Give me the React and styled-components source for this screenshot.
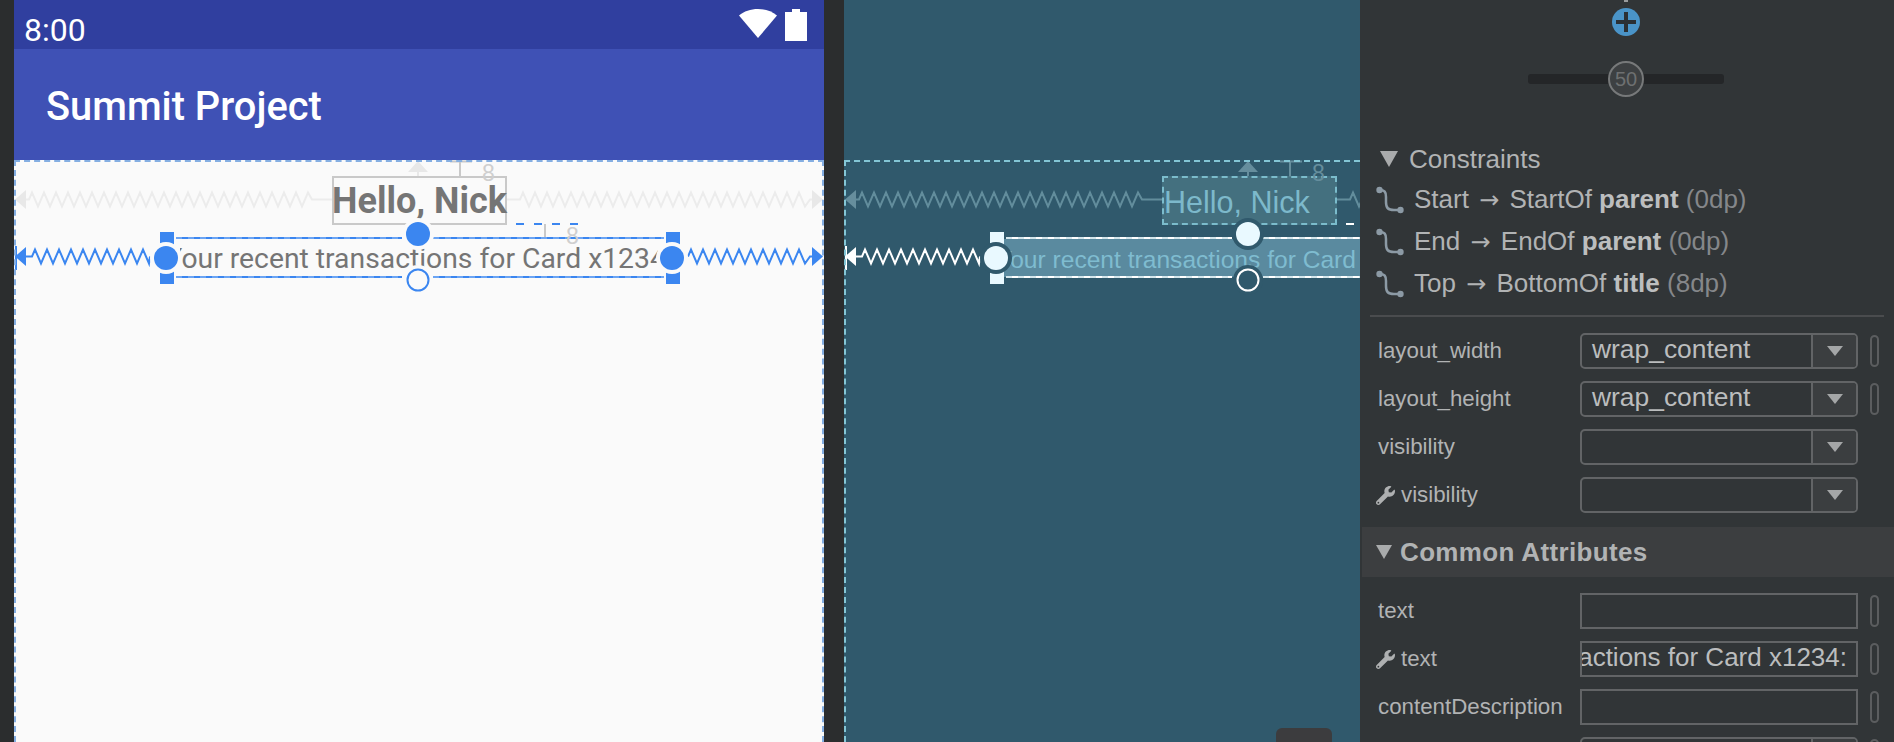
import React from "react";
import styled, { createGlobalStyle } from "styled-components";
import { FaWrench } from "react-icons/fa";

const GlobalStyle = createGlobalStyle`
  html, body {
    margin: 0;
    padding: 0;
    background: #2b2d2e;
  }
`;

const Page = styled.div`
  display: flex;
  width: 1894px;
  height: 742px;
  overflow: hidden;
  background: #2b2d2e;
`;

const Phone = styled.div`
  display: flex;
  flex-direction: column;
  flex: none;
  width: 810px;
  margin-left: 14px;
  margin-right: 20px;
`;

const StatusBar = styled.div`
  display: flex;
  justify-content: space-between;
  flex: none;
  height: 49px;
  padding: 9px 17px 0 10px;
  box-sizing: border-box;
  background: #303f9f;
  color: #fff;
  font: 400 32px/42px Roboto, sans-serif;
`;

const StatusIcons = styled.div`
  display: flex;
  align-items: flex-start;
  gap: 8px;
`;

const AppBar = styled.div`
  display: flex;
  align-items: center;
  flex: none;
  height: 111px;
  padding: 4px 0 0 32px;
  box-sizing: border-box;
  background: #3f51b5;
  color: #fff;
  font: 500 39.8px Roboto, sans-serif;
`;

const Surface = styled.div`
  position: relative;
  flex: 1;
  overflow: hidden;
  box-sizing: border-box;
  background: ${(p) => (p.$blueprint ? "#30596c" : "#fafafa")};
`;

const SurfaceEdge = styled.div`
  position: absolute;
  inset: 0;
  border: 2px dashed ${(p) => (p.$blueprint ? "#84c6d6" : "#84aee2")};
  border-right-width: ${(p) => (p.$blueprint ? 0 : "2px")};
  border-bottom-width: 0;
`;

const Blueprint = styled.div`
  display: flex;
  flex-direction: column;
  flex: none;
  width: 516px;
  height: 742px;
  background: #30596c;
`;

const BlueprintTop = styled.div`
  flex: none;
  height: 160px;
`;

const TitleBox = styled.div`
  position: absolute;
  left: 318px;
  top: 16px;
  width: 175px;
  height: 49px;
  box-sizing: border-box;
  display: flex;
  align-items: center;
  white-space: nowrap;
  ${(p) =>
    p.$blueprint
      ? `
    padding: 3px 0 0 0;
    background: #44707f;
    border: 2px dashed #7bbccc;
    color: #7db9cb;
    font: 400 30.5px "Liberation Sans", sans-serif;
  `
      : `
    justify-content: center;
    border: 2px solid #c9c9c9;
    color: #757575;
    font: 700 36px Roboto, sans-serif;
  `}
`;

const SubtitleBox = styled.div`
  position: absolute;
  left: 152px;
  top: 79px;
  width: 506px;
  height: 38px;
  padding: 0 14px;
  box-sizing: border-box;
  display: flex;
  background: ${(p) => (p.$blueprint ? "#5a8a9f" : "transparent")};
  color: ${(p) => (p.$blueprint ? "#7fbcd0" : "#757575")};
  font: ${(p) =>
    p.$blueprint
      ? '400 24.6px/42px "Liberation Sans", sans-serif'
      : "400 28.3px/40px Roboto, sans-serif"};
`;

const SubtitleClip = styled.div`
  display: flex;
  justify-content: ${(p) => (p.$blueprint ? "flex-start" : "center")};
  flex: 1;
  overflow: hidden;
  white-space: nowrap;

  span {
    margin-left: ${(p) => (p.$blueprint ? "-14px" : 0)};
  }
`;

const Measure = styled.span`
  position: absolute;
  left: ${(p) => p.$x}px;
  top: ${(p) => p.$y}px;
  color: ${(p) => p.$color};
  font: 400 23px/24px "Liberation Sans", sans-serif;
`;

const OverlaySvg = styled.svg`
  position: absolute;
  inset: 0;
  pointer-events: none;
`;

const CanvasTab = styled.div`
  position: absolute;
  left: 432px;
  bottom: 0;
  width: 56px;
  height: 14px;
  border-radius: 6px 6px 0 0;
  background: #3c3c3e;
`;

const Panel = styled.div`
  flex: none;
  width: 534px;
  height: 742px;
  overflow: hidden;
  background: #313537;
  color: #b1b3b4;
  font: 400 26px "Liberation Sans", sans-serif;
`;

const Widget = styled.div`
  display: flex;
  flex-direction: column;
  align-items: center;
  box-sizing: border-box;
  height: 88px;
  padding-right: 2px;
`;

const WidgetTick = styled.div`
  flex: none;
  width: 4px;
  height: 2px;
  margin-bottom: 6px;
  background: #9a9c9d;
`;

const AddButton = styled.div`
  position: relative;
  flex: none;
  width: 28px;
  height: 28px;
  border-radius: 50%;
  background: #4a94c8;

  &::before,
  &::after {
    content: "";
    position: absolute;
    background: #2b3034;
  }
  &::before {
    left: 4px;
    right: 4px;
    top: 12px;
    height: 4px;
  }
  &::after {
    top: 4px;
    bottom: 4px;
    left: 12px;
    width: 4px;
  }
`;

const Slider = styled.div`
  display: flex;
  align-items: center;
  justify-content: center;
  width: 196px;
  height: 10px;
  margin-top: 38px;
  border-radius: 3px;
  background: #242628;
`;

const Knob = styled.div`
  display: flex;
  align-items: center;
  justify-content: center;
  flex: none;
  width: 36px;
  height: 36px;
  box-sizing: border-box;
  border: 2px solid #77797a;
  border-radius: 50%;
  background: #3d4042;
  color: #6e7071;
  font-size: 20px;
`;

const SectionTitle = styled.div`
  display: flex;
  align-items: center;
  gap: 11px;
  height: 40px;
  margin-top: 51px;
  padding-left: 20px;
`;

const Triangle = styled.span`
  flex: none;
  width: 0;
  height: 0;
  border-left: ${(p) => p.$size}px solid transparent;
  border-right: ${(p) => p.$size}px solid transparent;
  border-top: ${(p) => p.$size * 1.8}px solid #a9abac;
`;

const ConstraintRow = styled.div`
  display: flex;
  align-items: center;
  gap: 10px;
  height: 42px;
  padding-left: 16px;
  white-space: pre;

  span {
    margin-top: -2px;
  }
  b {
    color: #bcbebf;
  }
  i {
    font-style: normal;
    color: #85878a;
  }
`;

const Arrow = styled.em`
  font: 400 24px "DejaVu Sans", sans-serif;
  margin: 0 3px 0 3px;
`;

const Divider = styled.div`
  height: 2px;
  margin: 10px 10px 0;
  background: #4a4c4e;
`;

const Form = styled.div`
  display: flex;
  flex-direction: column;
  gap: 12px;
  margin-top: 16px;
`;

const PropRow = styled.div`
  display: flex;
  align-items: center;
  flex: none;
  height: 36px;
`;

const PropLabel = styled.div`
  display: flex;
  align-items: center;
  gap: 6px;
  flex: none;
  width: 220px;
  padding-left: ${(p) => (p.$wrench ? 16 : 18)}px;
  box-sizing: border-box;
  font-size: 22.3px;
  white-space: nowrap;
`;

const Combo = styled.div`
  display: flex;
  flex: none;
  width: 278px;
  height: 36px;
  box-sizing: border-box;
  border: 2px solid #626466;
  border-radius: 5px;
`;

const ComboValue = styled.div`
  flex: 1;
  padding-left: 10px;
  color: #bbbdbe;
  font-size: 26.4px;
  line-height: 29px;
`;

const ComboArrow = styled.div`
  display: flex;
  align-items: center;
  justify-content: center;
  flex: none;
  width: 43px;
  border-left: 2px solid #626466;
  background: #3b3e40;
  border-radius: 0 3px 3px 0;
`;

const TextField = styled.div`
  display: flex;
  justify-content: flex-end;
  flex: none;
  width: 278px;
  height: 36px;
  padding: 0 9px 0 5px;
  box-sizing: border-box;
  overflow: hidden;
  border: 2px solid #626466;
  color: #bbbdbe;
  font-size: 26px;
  line-height: 29px;
  white-space: nowrap;
`;

const Pill = styled.div`
  flex: none;
  width: 9px;
  height: 32px;
  margin-left: 12px;
  box-sizing: border-box;
  border: 2px solid #5b5d5f;
  border-radius: 5px;
`;

const SectionBar = styled.div`
  display: flex;
  align-items: center;
  gap: 8px;
  height: 50px;
  margin: 14px 0 0 2px;
  padding-left: 14px;
  background: #3c3e40;
  font-size: 26px;
  font-weight: 700;
  letter-spacing: 0.35px;
`;

// zig-zag spring used by the layout editor for constraints
const zigzag = (x0, x1, y, amp = 7, step = 6) => {
  const pts = [`${x0},${y}`];
  let up = true;
  for (let x = x0 + step / 2; x < x1; x += step) {
    pts.push(`${x},${up ? y - amp : y + amp}`);
    up = !up;
  }
  pts.push(`${x1},${y}`);
  return pts.join(" ");
};

const ChevronArrow = () => (
  <svg width="16" height="10" viewBox="0 0 16 10">
    <path d="M0 0h16L8 10z" fill="#a4a6a7" />
  </svg>
);

const ConstraintIcon = () => (
  <svg width="28" height="28" viewBox="0 0 28 28" style={{ flex: "none" }}>
    <path d="M3 4c6 0 7 2 7 7v5c0 6 2 8 8 8h7" fill="none" stroke="#8c9aa5" strokeWidth="2.5" />
    <circle cx="3.5" cy="4" r="3.2" fill="#8c9aa5" />
    <circle cx="24.5" cy="24" r="3.2" fill="#8c9aa5" />
  </svg>
);

const palettes = {
  design: {
    faint: "#ececec",
    active: "#3b86f0",
    activeDash: "#9cc3f7",
    halo: "#fafafa",
    solid: "#3b86f0",
    mark: "#c9c9c9",
    hollow: "#fafafa",
    hollowStroke: "#3b86f0",
    tri: "#e8e8e8",
  },
  blueprint: {
    faint: "#628d9c",
    active: "#ffffff",
    activeDash: "#a9cdd8",
    halo: "#30596c",
    solid: "#e9f9ff",
    mark: "#668e9d",
    hollow: "#30596c",
    hollowStroke: "#ffffff",
    tri: "#668e9d",
  },
};

const ConstraintOverlay = ({ kind }) => {
  const c = palettes[kind];
  return (
    <OverlaySvg width="810" height="582" viewBox="0 0 810 582">
      {/* title: start, end and top constraints */}
      <path d="M12 30v19L1 39.5z" fill={c.tri} />
      <polyline points={`12,39.5 15,39.5 ${zigzag(15, 298, 39.5)} 318,39.5`} fill="none" stroke={c.faint} strokeWidth="2" />
      <polyline points={`493,39.5 506,39.5 ${zigzag(506, 796, 39.5)} 798,39.5`} fill="none" stroke={c.faint} strokeWidth="2" />
      <path d="M798 30v19l11-9.5z" fill={c.tri} />
      <path d="M394 12h20l-10-11z" fill={c.tri} />
      <path d="M404 12v4" stroke={c.tri} strokeWidth="2" />
      <path d="M436 1.5h22M446 1.5v15" fill="none" stroke={c.mark} strokeWidth="2" />

      {/* subtitle: start, end and top constraints */}
      <path d="M1 86h2v24H1z" fill={c.active} />
      <path d="M12 87v19L1 96.5z" fill={c.active} />
      <polyline points={`12,96.5 18,96.5 ${zigzag(18, 136, 96.5)}`} fill="none" stroke={c.active} strokeWidth="2" />
      <polyline points={`${zigzag(674, 796, 96.5)} 798,96.5`} fill="none" stroke={c.active} strokeWidth="2" />
      <path d="M798 87v19l11-9.5z" fill={c.active} />
      <path d="M502 64h69" stroke={c.active} strokeWidth="2" strokeDasharray="8 10" />
      <path d="M531 64v14M519 78h22" fill="none" stroke={c.mark} strokeWidth="2" />

      {/* selection edges and handles */}
      <path d="M162 78h226M419 78h231M162 117h226M419 117h231" stroke={c.active} strokeWidth="2" />
      <path d="M162 78h226M419 78h231M162 117h226M419 117h231" stroke={c.activeDash} strokeWidth="1" strokeDasharray="6 6" />
      <rect x="146" y="72" width="14" height="14" fill={c.solid} />
      <rect x="146" y="111" width="14" height="13" fill={c.solid} />
      <rect x="652" y="72" width="14" height="14" fill={c.solid} />
      <rect x="652" y="111" width="14" height="13" fill={c.solid} />
      <circle cx="152" cy="98" r="16" fill={c.halo} />
      <circle cx="152" cy="98" r="12" fill={c.solid} />
      <circle cx="658" cy="98" r="16" fill={c.halo} />
      <circle cx="658" cy="98" r="12" fill={c.solid} />
      <circle cx="404" cy="74" r="16" fill={c.halo} />
      <circle cx="404" cy="74" r="12" fill={c.solid} />
      <circle cx="404" cy="120" r="15" fill={c.halo} />
      <circle cx="404" cy="120" r="10.5" fill={c.hollow} stroke={c.hollowStroke} strokeWidth="2" />
    </OverlaySvg>
  );
};

const LayoutCanvas = ({ blueprint }) => {
  const kind = blueprint ? "blueprint" : "design";
  const markColor = blueprint ? "#668e9d" : "#cfcfcf";
  return (
    <Surface $blueprint={blueprint}>
      <TitleBox $blueprint={blueprint}>Hello, Nick</TitleBox>
      <SubtitleBox $blueprint={blueprint}>
        <SubtitleClip $blueprint={blueprint}>
          <span>Your recent transactions for Card x1234:</span>
        </SubtitleClip>
      </SubtitleBox>
      <ConstraintOverlay kind={kind} />
      <Measure $x={468} $y={1} $color={markColor}>
        8
      </Measure>
      <Measure $x={552} $y={64} $color={markColor}>
        8
      </Measure>
      <SurfaceEdge $blueprint={blueprint} />
      {blueprint && <CanvasTab />}
    </Surface>
  );
};

const constraints = [
  { from: "Start", to: "StartOf", target: "parent", margin: "(0dp)" },
  { from: "End", to: "EndOf", target: "parent", margin: "(0dp)" },
  { from: "Top", to: "BottomOf", target: "title", margin: "(8dp)" },
];

const ComboRow = ({ label, value, wrench, pill }) => (
  <PropRow>
    <PropLabel $wrench={wrench}>
      {wrench && <FaWrench size={19} color="#aeb0b1" />}
      {label}
    </PropLabel>
    <Combo>
      <ComboValue>{value}</ComboValue>
      <ComboArrow>
        <ChevronArrow />
      </ComboArrow>
    </Combo>
    {pill && <Pill />}
  </PropRow>
);

const TextRow = ({ label, value, wrench }) => (
  <PropRow>
    <PropLabel $wrench={wrench}>
      {wrench && <FaWrench size={19} color="#aeb0b1" />}
      {label}
    </PropLabel>
    <TextField>{value}</TextField>
    <Pill />
  </PropRow>
);

export default function App() {
  return (
    <Page>
      <GlobalStyle />
      <Phone>
        <StatusBar>
          <span>8:00</span>
          <StatusIcons>
            <svg width="38" height="29" viewBox="0 0 38 29">
              <path d="M19 29 0 6.5C5 2.3 11.6 0 19 0s14 2.3 19 6.5z" fill="#fff" />
            </svg>
            <svg width="22" height="32" viewBox="0 0 22 32">
              <path d="M7 0h8v3h7v29H0V3h7z" fill="#fff" />
            </svg>
          </StatusIcons>
        </StatusBar>
        <AppBar>Summit Project</AppBar>
        <LayoutCanvas />
      </Phone>
      <Blueprint>
        <BlueprintTop />
        <LayoutCanvas blueprint />
      </Blueprint>
      <Panel>
        <Widget>
          <WidgetTick />
          <AddButton />
          <Slider>
            <Knob>50</Knob>
          </Slider>
        </Widget>
        <SectionTitle>
          <Triangle $size={9} />
          Constraints
        </SectionTitle>
        {constraints.map((c) => (
          <ConstraintRow key={c.from}>
            <ConstraintIcon />
            <span>
              {c.from} <Arrow>→</Arrow> {c.to} <b>{c.target}</b> <i>{c.margin}</i>
            </span>
          </ConstraintRow>
        ))}
        <Divider />
        <Form>
          <ComboRow label="layout_width" value="wrap_content" pill />
          <ComboRow label="layout_height" value="wrap_content" pill />
          <ComboRow label="visibility" />
          <ComboRow label="visibility" wrench />
        </Form>
        <SectionBar>
          <Triangle $size={8} />
          Common Attributes
        </SectionBar>
        <Form>
          <TextRow label="text" />
          <TextRow label="text" wrench value="Your recent transactions for Card x1234:" />
          <TextRow label="contentDescription" />
          <ComboRow label="" pill />
        </Form>
      </Panel>
    </Page>
  );
}
